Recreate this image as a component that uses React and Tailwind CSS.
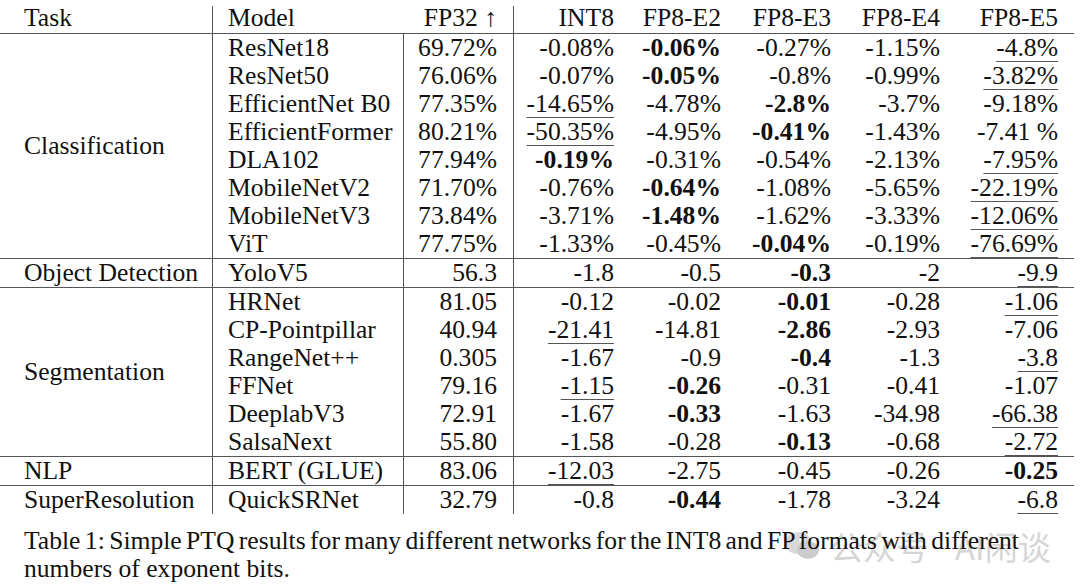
import React from 'react';

// '*' = bold (best), '_' = underlined (worst)
const groups = [
  {
    task: 'Classification',
    rows: [
      ['ResNet18', '69.72%', '-0.08%', '*-0.06%', '-0.27%', '-1.15%', '_-4.8%'],
      ['ResNet50', '76.06%', '-0.07%', '*-0.05%', '-0.8%', '-0.99%', '_-3.82%'],
      ['EfficientNet B0', '77.35%', '_-14.65%', '-4.78%', '*-2.8%', '-3.7%', '-9.18%'],
      ['EfficientFormer', '80.21%', '_-50.35%', '-4.95%', '*-0.41%', '-1.43%', '-7.41 %'],
      ['DLA102', '77.94%', '*-0.19%', '-0.31%', '-0.54%', '-2.13%', '_-7.95%'],
      ['MobileNetV2', '71.70%', '-0.76%', '*-0.64%', '-1.08%', '-5.65%', '_-22.19%'],
      ['MobileNetV3', '73.84%', '-3.71%', '*-1.48%', '-1.62%', '-3.33%', '_-12.06%'],
      ['ViT', '77.75%', '-1.33%', '-0.45%', '*-0.04%', '-0.19%', '_-76.69%'],
    ],
  },
  {
    task: 'Object Detection',
    rows: [['YoloV5', '56.3', '-1.8', '-0.5', '*-0.3', '-2', '_-9.9']],
  },
  {
    task: 'Segmentation',
    rows: [
      ['HRNet', '81.05', '-0.12', '-0.02', '*-0.01', '-0.28', '_-1.06'],
      ['CP-Pointpillar', '40.94', '_-21.41', '-14.81', '*-2.86', '-2.93', '-7.06'],
      ['RangeNet++', '0.305', '-1.67', '-0.9', '*-0.4', '-1.3', '_-3.8'],
      ['FFNet', '79.16', '_-1.15', '*-0.26', '-0.31', '-0.41', '-1.07'],
      ['DeeplabV3', '72.91', '-1.67', '*-0.33', '-1.63', '-34.98', '_-66.38'],
      ['SalsaNext', '55.80', '-1.58', '-0.28', '*-0.13', '-0.68', '_-2.72'],
    ],
  },
  {
    task: 'NLP',
    rows: [['BERT (GLUE)', '83.06', '_-12.03', '-2.75', '-0.45', '-0.26', '*-0.25']],
  },
  {
    task: 'SuperResolution',
    rows: [['QuickSRNet', '32.79', '-0.8', '*-0.44', '-1.78', '-3.24', '_-6.8']],
  },
];

const valueWidths = ['w-[116px]', 'w-[107px]', 'w-[110px]', 'w-[109px]', 'w-[118px]'];

const Sep = () => <div className="w-px shrink-0 self-stretch bg-[#555]" />;

const Rule = () => <div className="h-px w-[1074px] bg-[#555]" />;

const Value = ({ text }) => {
  if (text.startsWith('*')) return <span className="font-bold">{text.slice(1)}</span>;
  if (text.startsWith('_'))
    return (
      <span className="underline decoration-[#555] decoration-1 underline-offset-[5px]">
        {text.slice(1)}
      </span>
    );
  return <span>{text}</span>;
};

const Row = ({ row }) => {
  const [model, fp32, ...vals] = row;
  return (
    <div className="flex h-[28px] items-center">
      <div className="w-[190px] shrink-0 pl-[15px] whitespace-nowrap">{model}</div>
      <Sep />
      <div className="w-[109px] shrink-0 pr-[16px] text-right">{fp32}</div>
      <Sep />
      {vals.map((v, i) => (
        <div key={i} className={`${valueWidths[i]} shrink-0 pr-[16px] text-right whitespace-nowrap`}>
          <Value text={v} />
        </div>
      ))}
    </div>
  );
};

const App = () => {
  const headers = ['INT8', 'FP8-E2', 'FP8-E3', 'FP8-E4', 'FP8-E5'];

  return (
    <div className="relative h-[584px] w-[1080px] overflow-hidden bg-white font-['Liberation_Serif','DejaVu_Serif',serif] text-[25.6px] leading-[28px] text-[#111]">
      <div className="flex flex-col">
        {/* header */}
        <div className="flex h-[33px] items-start">
          <div className="w-[212px] shrink-0 pl-[24px] pt-[4px]">Task</div>
          <div className="mt-[6px] h-[27px] w-px shrink-0 bg-[#555]" />
          <div className="w-[190px] shrink-0 pl-[15px] pt-[4px]">Model</div>
          <div className="w-px shrink-0" />
          <div className="w-[109px] shrink-0 pr-[16px] pt-[4px] text-right whitespace-nowrap">FP32 ↑</div>
          <div className="mt-[6px] h-[27px] w-px shrink-0 bg-[#555]" />
          {headers.map((h, i) => (
            <div key={h} className={`${valueWidths[i]} shrink-0 pr-[16px] pt-[4px] text-right`}>
              {h}
            </div>
          ))}
        </div>
        <Rule />

        {groups.map((g, gi) => (
          <React.Fragment key={g.task}>
            <div className="flex">
              <div className="flex w-[212px] shrink-0 items-center pl-[24px] whitespace-nowrap">{g.task}</div>
              <Sep />
              <div className="flex flex-col">
                {g.rows.map((r) => (
                  <Row key={r[0]} row={r} />
                ))}
              </div>
            </div>
            {gi < groups.length - 1 && <Rule />}
          </React.Fragment>
        ))}
      </div>

      {/* caption, with the faint watermark behind it */}
      <div className="relative mt-[13px] pl-[24px]">
        <div className="pointer-events-none absolute left-[784px] top-[2px] flex items-center text-[#d6d6d6]">
          <svg width="36" height="34" viewBox="0 0 36 34" className="mr-[10px] shrink-0">
            <ellipse cx="14" cy="14" rx="13" ry="11" fill="#d9d9d9" />
            <ellipse cx="24" cy="21" rx="11" ry="9" fill="#cbcbcb" />
            <circle cx="9" cy="11" r="1.8" fill="#fff" />
            <circle cx="17" cy="11" r="1.8" fill="#fff" />
          </svg>
          <span className="font-['Noto_Sans_CJK_SC',sans-serif] text-[33px] leading-[34px] whitespace-nowrap">公众号</span>
          <span className="ml-[26px] font-['Noto_Sans_CJK_SC',sans-serif] text-[33px] leading-[34px] whitespace-nowrap">AI闲谈</span>
        </div>
        <p className="relative whitespace-nowrap">
          <span className="[word-spacing:-2px]">
            Table 1: Simple PTQ results for many different networks for the INT8 and FP formats with different
          </span>
          <br />
          numbers of exponent bits.
        </p>
      </div>
    </div>
  );
};

export default App;
